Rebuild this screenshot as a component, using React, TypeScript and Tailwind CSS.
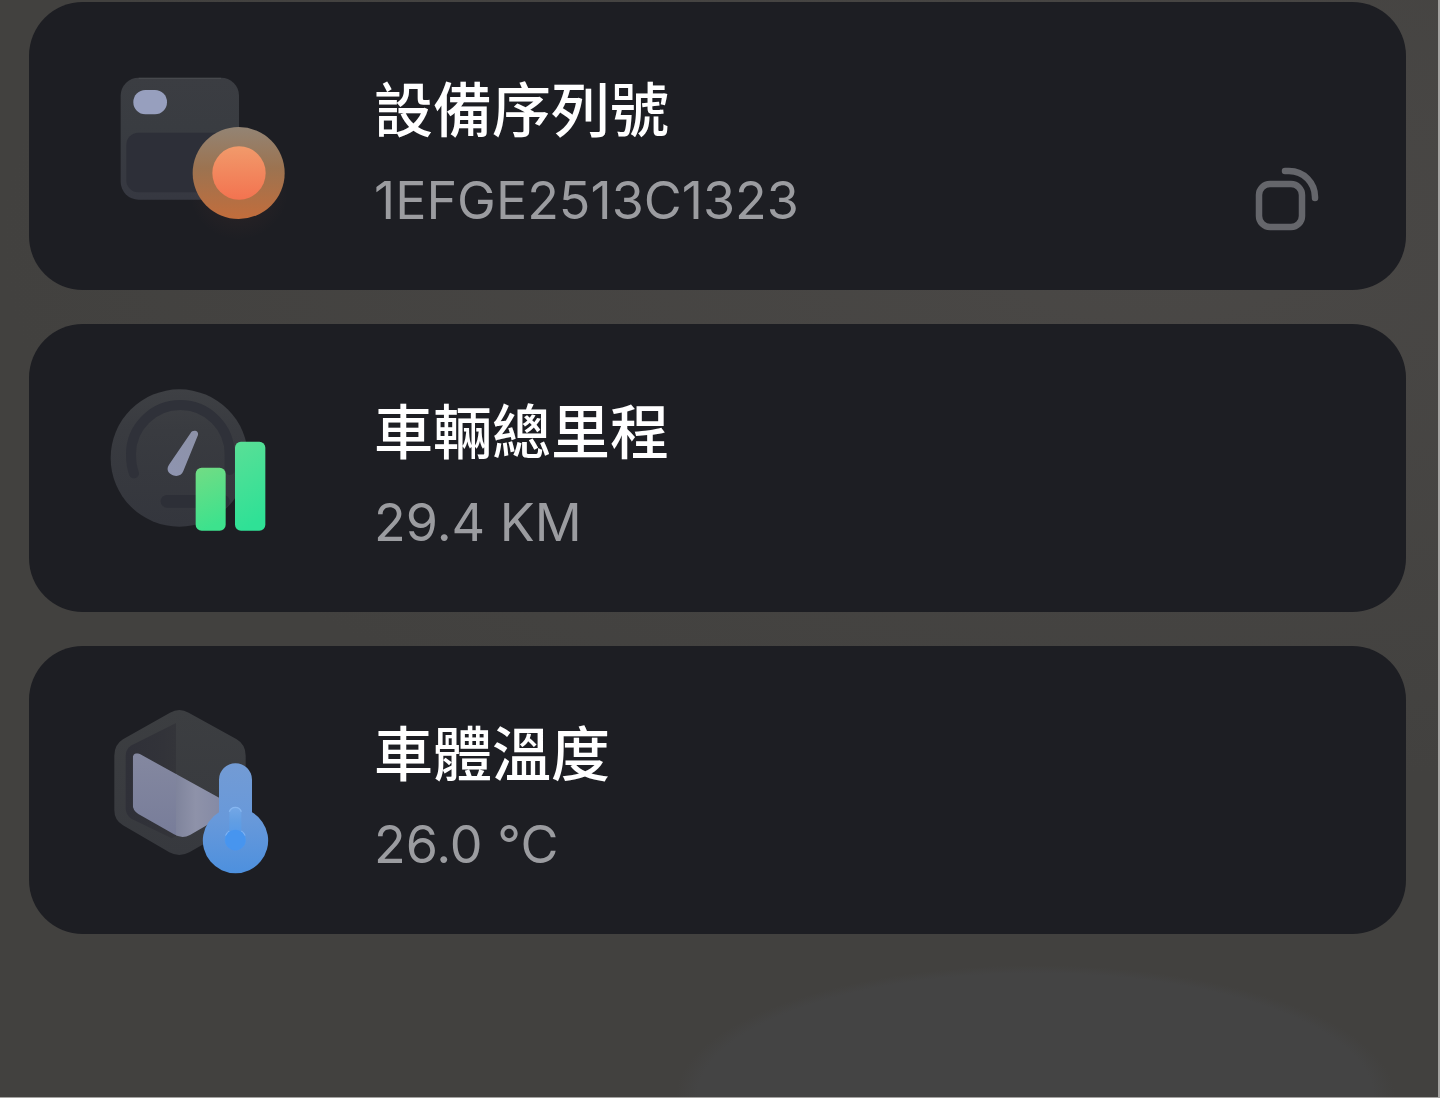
import type { ReactNode } from 'react';

function DeviceIcon() {
  return (
    <svg viewBox="0 0 690 540" className="h-[180px] w-[230px] shrink-0" aria-hidden="true">
      <defs>
        <linearGradient id="device-body" x1="0" y1="0" x2="0" y2="1">
          <stop offset="0" stopColor="#3b3d42" />
          <stop offset="0.4" stopColor="#393c41" />
          <stop offset="1" stopColor="#363841" />
        </linearGradient>
        <linearGradient id="device-ring" x1="0" y1="0" x2="0" y2="1">
          <stop offset="0" stopColor="#938474" />
          <stop offset="0.45" stopColor="#9c7350" />
          <stop offset="1" stopColor="#c26d3c" />
        </linearGradient>
        <linearGradient id="device-dot" x1="0" y1="0" x2="0" y2="1">
          <stop offset="0" stopColor="#f19a6b" />
          <stop offset="1" stopColor="#f37350" />
        </linearGradient>
        <radialGradient id="device-glow">
          <stop offset="0" stopColor="#f37350" stopOpacity="0.08" />
          <stop offset="1" stopColor="#f37350" stopOpacity="0" />
        </radialGradient>
      </defs>
      <rect x="92" y="53" width="355" height="366" rx="54" fill="url(#device-body)" />
      <path d="M146 55H393" stroke="#4a4c50" strokeWidth="3" />
      <rect x="109" y="218" width="325" height="179" rx="36" fill="#2d2f38" />
      <rect x="130" y="90" width="101" height="73" rx="36" fill="#979fbe" />
      <circle cx="446" cy="390" r="150" fill="url(#device-glow)" />
      <circle cx="446" cy="339" r="138" fill="url(#device-ring)" />
      <circle cx="447" cy="339" r="80" fill="url(#device-dot)" />
    </svg>
  );
}

function MileageIcon() {
  return (
    <svg viewBox="0 36 690 540" className="h-[180px] w-[230px] shrink-0" aria-hidden="true">
      <defs>
        <linearGradient id="mileage-face" x1="0" y1="0" x2="0" y2="1">
          <stop offset="0" stopColor="#3e4044" />
          <stop offset="0.3" stopColor="#393b40" />
          <stop offset="1" stopColor="#34363d" />
        </linearGradient>
        <linearGradient id="mileage-needle" x1="1" y1="0" x2="0" y2="1">
          <stop offset="0" stopColor="#8d92a8" />
          <stop offset="1" stopColor="#8e94b0" />
        </linearGradient>
        <linearGradient id="mileage-short" x1="0" y1="0" x2="0.2" y2="1">
          <stop offset="0" stopColor="#72dc84" />
          <stop offset="1" stopColor="#3de28d" />
        </linearGradient>
        <linearGradient id="mileage-tall" x1="0" y1="0" x2="0.2" y2="1">
          <stop offset="0" stopColor="#5adf96" />
          <stop offset="1" stopColor="#2fe196" />
        </linearGradient>
      </defs>
      <circle cx="268" cy="264" r="206" fill="url(#mileage-face)" />
      <path
        d="M132 310C124 290 123 272 123 253A148 148 0 0 1 419 253V300"
        fill="none"
        stroke="#2f3139"
        strokeWidth="30"
        strokeLinecap="round"
      />
      <path d="M231 394H400" stroke="#2d2f37" strokeWidth="38" strokeLinecap="round" />
      <path
        d="M302 189C306 179 327 179 324 195L280 303C274 318 258 322 243 313C231 306 230 294 238 283Z"
        fill="url(#mileage-needle)"
      />
      <rect x="317" y="293" width="90" height="189" rx="18" fill="url(#mileage-short)" />
      <rect x="435" y="215" width="91" height="267" rx="18" fill="url(#mileage-tall)" />
    </svg>
  );
}

function TemperatureIcon() {
  return (
    <svg viewBox="0 27 690 540" className="h-[180px] w-[230px] shrink-0" aria-hidden="true">
      <defs>
        <linearGradient id="temp-box" x1="0" y1="0" x2="0" y2="1">
          <stop offset="0" stopColor="#3c3e41" />
          <stop offset="1" stopColor="#37393e" />
        </linearGradient>
        <linearGradient id="temp-shade" x1="0" y1="0" x2="1" y2="0">
          <stop offset="0" stopColor="#2f3038" />
          <stop offset="0.75" stopColor="#323339" />
          <stop offset="1" stopColor="#34353a" />
        </linearGradient>
        <linearGradient id="temp-left" x1="0" y1="0" x2="0" y2="1">
          <stop offset="0" stopColor="#8488a0" />
          <stop offset="1" stopColor="#777c99" />
        </linearGradient>
        <linearGradient id="temp-right" x1="0" y1="0" x2="1" y2="0">
          <stop offset="0" stopColor="#7f849c" />
          <stop offset="0.35" stopColor="#8e92a9" />
          <stop offset="1" stopColor="#8086a3" />
        </linearGradient>
        <linearGradient id="temp-bulb" x1="0" y1="204" x2="0" y2="537" gradientUnits="userSpaceOnUse">
          <stop offset="0" stopColor="#739bd4" />
          <stop offset="0.5" stopColor="#6899da" />
          <stop offset="1" stopColor="#4d90de" />
        </linearGradient>
        <linearGradient id="temp-core" x1="0" y1="332" x2="0" y2="465" gradientUnits="userSpaceOnUse">
          <stop offset="0" stopColor="#76a8e6" />
          <stop offset="0.35" stopColor="#629ee3" />
          <stop offset="1" stopColor="#4795f0" />
        </linearGradient>
        <clipPath id="temp-fill">
          <path d="M128 190C128 177 139 171 151 178L420 326V350L300 420Q276 433 252 418L145 357Q128 347 128 328Z" />
        </clipPath>
      </defs>
      <path
        d="M240 53Q268 37 296 53L440 133Q467 149 467 182V345Q467 376 440 391L298 472Q268 488 238 472L99 391Q73 376 73 345V182Q73 149 99 133Z"
        fill="url(#temp-box)"
      />
      <path
        d="M258 84L125 151Q107 161 107 182V340Q107 360 124 371L245 430L258 424Z"
        fill="url(#temp-shade)"
      />
      <g clipPath="url(#temp-fill)">
        <rect x="128" y="170" width="132" height="270" fill="url(#temp-left)" />
        <rect x="258" y="170" width="170" height="270" fill="url(#temp-right)" />
      </g>
      <path d="M387 254A49 49 0 0 1 486 254V352A98 98 0 1 1 387 352Z" fill="url(#temp-bulb)" />
      <path d="M418 350A19 19 0 0 1 454 350V408A32 32 0 1 1 418 408Z" fill="url(#temp-core)" />
      <path d="M418 350A19 19 0 0 1 454 350" fill="none" stroke="#86b6f0" strokeWidth="4" />
      <path d="M407 422A31 31 0 0 1 418 408M454 408A31 31 0 0 1 465 422" fill="none" stroke="#7db2f2" strokeWidth="4" />
      <circle cx="436" cy="434" r="30" fill="#4795ef" />
    </svg>
  );
}

function CopyIcon() {
  return (
    <svg viewBox="0 0 66 66" className="size-[66px]" fill="none" stroke="#65666b" aria-hidden="true">
      <rect x="5" y="17" width="43" height="43" rx="11" strokeWidth="6.500" />
      <path d="M31 4H35C50 4 61 16 61 30V31" strokeWidth="6.500" strokeLinecap="round" />
    </svg>
  );
}

interface InfoCardProps {
  icon: ReactNode;
  title: string;
  value: string;
  action?: ReactNode;
}

function InfoCard({ icon, title, value, action }: InfoCardProps) {
  return (
    <section className="flex min-h-[288px] items-start rounded-[54px] bg-[#1d1e23] pt-[58px] pr-[86px] pl-[61px]">
      {icon}
      <div className="ml-[54px] min-w-0 flex-1 pt-[19px]">
        <h2 className="text-[59px] leading-[64px] font-medium text-white">{title}</h2>
        <p className="mt-[26px] text-[52px] leading-[64px] text-[#9b9ca0]">{value}</p>
      </div>
      {action}
    </section>
  );
}

function App() {
  return (
    <main className="min-h-screen border-r-2 border-b border-[#a5a4a2] bg-[#42413f] bg-[radial-gradient(25%_12%_at_72%_100%,#444444_94%,transparent_100%),radial-gradient(80%_50%_at_80%_22%,#4a4846,transparent)] pt-0.5 pr-8 pb-40 pl-[29px] font-['Inter','Noto_Sans_CJK_TC',sans-serif]">
      <div className="flex flex-col gap-[34px]">
        <InfoCard
          icon={<DeviceIcon />}
          title="設備序列號"
          value="1EFGE2513C1323"
          action={
            <button type="button" aria-label="複製設備序列號" className="mt-[107px] cursor-pointer">
              <CopyIcon />
            </button>
          }
        />
        <InfoCard icon={<MileageIcon />} title="車輛總里程" value="29.4 KM" />
        <InfoCard icon={<TemperatureIcon />} title="車體溫度" value="26.0 °C" />
      </div>
    </main>
  );
}

export default App;
